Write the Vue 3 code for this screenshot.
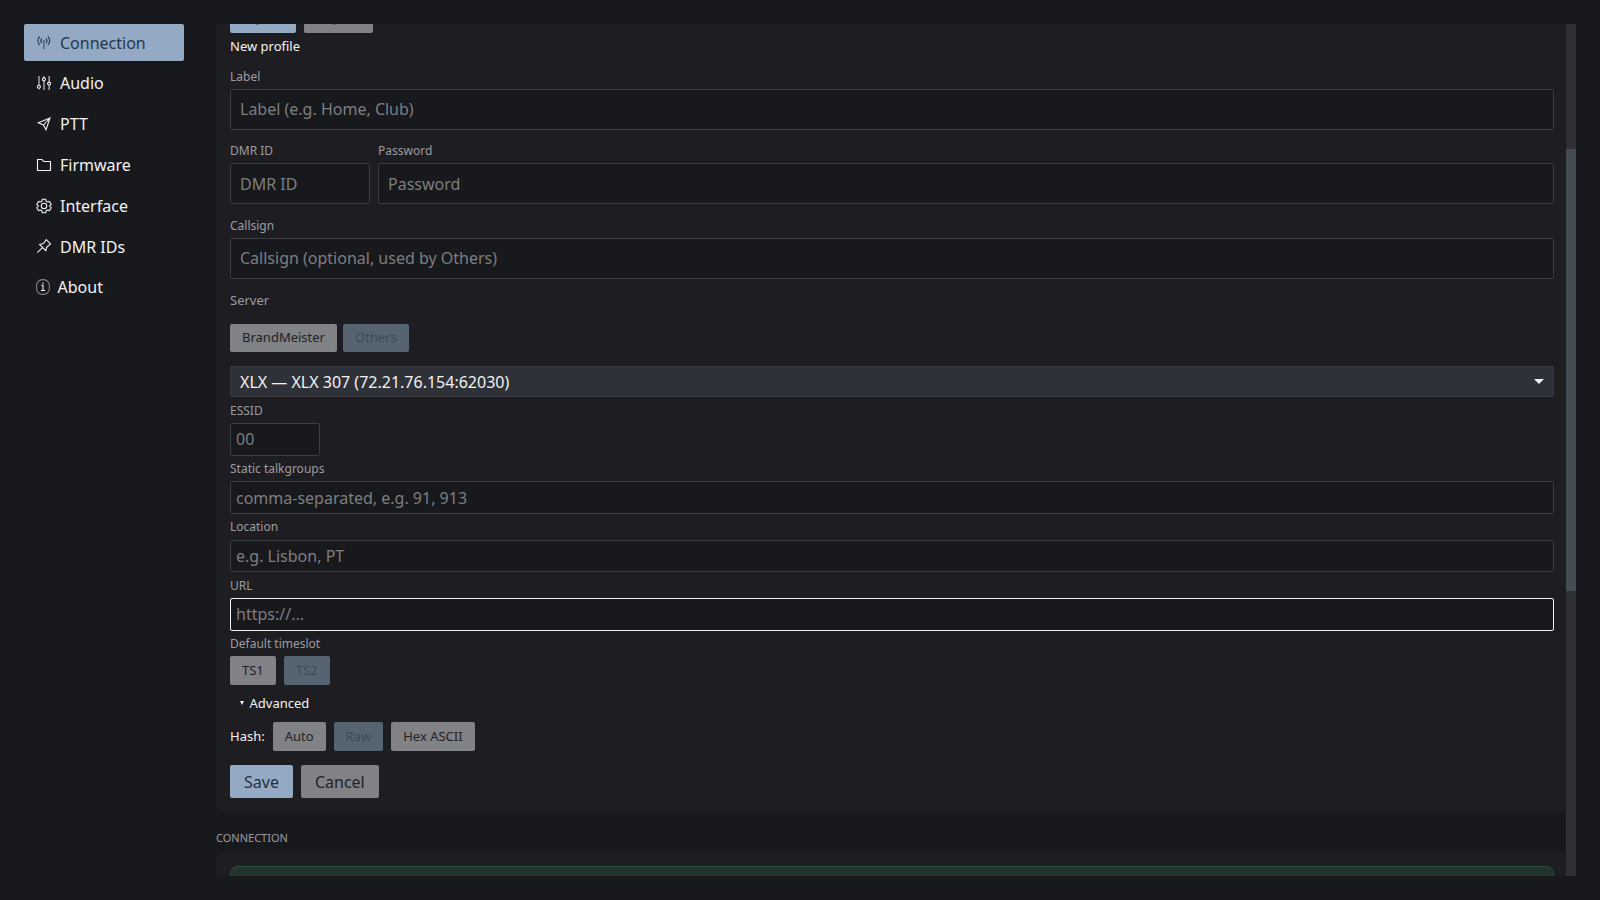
<script setup>
import { ref } from 'vue'

const active = ref('Connection')
const nav = ['Connection', 'Audio', 'PTT', 'Firmware', 'Interface', 'DMR IDs', 'About']
</script>

<template>
  <div class="window">
    <nav class="side">
      <button v-for="name in nav" :key="name" class="item" :class="{ on: name === active, info: name === 'About' }" @click="active = name">
        <svg v-if="name === 'Connection'" viewBox="0 0 16 16"><path class="stem" d="M7.800 7v7" /><path d="M3.800 1.500C1.200 4 1.200 7.500 3.800 10M11.800 1.500c2.600 2.500 2.600 6 0 8.500M5.700 3.500c-1.300 1.500-1.300 3 0 4.500M9.900 3.500c1.300 1.500 1.300 3 0 4.500M7.800 5v1.800" /></svg>
        <svg v-else-if="name === 'Audio'" viewBox="0 0 16 16"><path class="stem" d="M3 1v9M3 13.300v1.200M8 1v1.700M8 6v9M13.200 1v6M13.200 10.300v4.700" /><circle cx="2.900" cy="11.700" r="1.500" /><circle cx="7.900" cy="4.400" r="1.500" /><circle cx="13.100" cy="8.600" r="1.500" /></svg>
        <svg v-else-if="name === 'PTT'" viewBox="0 0 16 16"><path d="M14 2L2.300 6.700l5.200 2.300L10 13.800zM14 2L7.500 9" /></svg>
        <svg v-else-if="name === 'Firmware'" viewBox="0 0 16 16"><path d="M1.500 2.500h4.500l1.500 2h7v9h-13z" /></svg>
        <svg v-else-if="name === 'Interface'" viewBox="0 0 16 16"><path d="M6.300 1.300h3.400l.5 2 1.300.7 2-.6 1.700 2.900-1.500 1.400v.6l1.500 1.400-1.700 2.900-2-.6-1.300.7-.5 2H6.300l-.5-2-1.300-.7-2 .6L.8 9.700l1.500-1.400v-.6L.8 6.300l1.700-2.900 2 .6 1.300-.7z" /><circle cx="8" cy="8" r="2.700" /></svg>
        <svg v-else-if="name === 'DMR IDs'" viewBox="0 0 16 16"><path d="M10.300 .7l4.200 4.200L10.800 8l-1 3.700L3.600 5.500l3.800-1zM6.500 8.700L1.300 13.700" /></svg>
        <svg v-else viewBox="0 0 14 16"><rect class="faint" x=".6" y=".6" width="12.800" height="14.800" rx="6" /><path d="M5.300 6.300h1.700v5M4.900 11.500h4.200M7 3.400v1.500" /></svg>
        <span>{{ name }}</span>
      </button>
    </nav>

    <main class="view">
      <div class="content">
        <section class="card profile">
          <div class="row top">
            <button class="btn small primary">Import</button>
            <button class="btn small exp">Export</button>
          </div>
          <div class="title">New profile</div>

          <label class="cap c1">Label</label>
          <input class="field big up" placeholder="Label (e.g. Home, Club)" />

          <div class="row pair">
            <div class="dmr"><label class="cap">DMR ID</label><input class="field big" placeholder="DMR ID" /></div>
            <div class="pass"><label class="cap">Password</label><input class="field big" placeholder="Password" /></div>
          </div>

          <label class="cap c2">Callsign</label>
          <input class="field big up" placeholder="Callsign (optional, used by Others)" />

          <label class="cap server">Server</label>
          <div class="row kinds">
            <button class="btn small">BrandMeister</button>
            <button class="btn small off">Others</button>
          </div>

          <div class="select">
            <span>XLX — XLX 307 (72.21.76.154:62030)</span>
            <svg class="caret" viewBox="0 0 10 5"><path d="M0 0h10L5 5z" /></svg>
          </div>

          <label class="cap tight low">ESSID</label>
          <input class="field essid up" placeholder="00" />
          <label class="cap tight">Static talkgroups</label>
          <input class="field" placeholder="comma-separated, e.g. 91, 913" />
          <label class="cap tight wide">Location</label>
          <input class="field loc" placeholder="e.g. Lisbon, PT" />
          <label class="cap tight low">URL</label>
          <input class="field focus up" placeholder="https://..." />
          <label class="cap tight">Default timeslot</label>
          <div class="row slots">
            <button class="btn small">TS1</button>
            <button class="btn small off">TS2</button>
          </div>

          <div class="adv"><svg viewBox="0 0 4 4"><path d="M0 0h4L2 4z" /></svg>Advanced</div>
          <div class="row hash">
            <span>Hash:</span>
            <button class="btn small">Auto</button>
            <button class="btn small off">Raw</button>
            <button class="btn small">Hex ASCII</button>
          </div>
          <div class="row actions">
            <button class="btn primary">Save</button>
            <button class="btn">Cancel</button>
          </div>
        </section>

        <h2>CONNECTION</h2>
        <section class="card status"><div class="banner"></div></section>
      </div>
      <div class="track"><div class="thumb"></div></div>
    </main>
  </div>
</template>

<style>
html, body { background: #18191c; overflow: hidden; }
</style>

<style scoped>
* { box-sizing: border-box; }
.window {
  height: 900px; padding: 24px; display: flex; gap: 32px;
  background: #18191c; color: #f2f2f3;
  font: 16px/22px "Noto Sans", sans-serif;
}
button, input { font-family: inherit; margin: 0; }
.side { width: 160px; display: flex; flex-direction: column; gap: 4px; flex: none; }
.item {
  height: 36.900px; padding: 0 12px; display: flex; align-items: center; gap: 8px; flex: none;
  border: 0; border-radius: 2px; background: none; color: inherit; font-size: 16px; line-height: 22px; text-align: left;
}
.item.on { background: #94a9c4; color: #26384a; padding-top: 1px; }
.item svg { width: 16px; height: 16px; fill: none; stroke: currentColor; stroke-width: 1.100; flex: none; }
.item.info { gap: 7.500px; padding-bottom: 2px; }
.item.info svg { width: 14px; }
.faint { opacity: .5; }
.stem { opacity: .6; stroke-width: 1.600; }
.view { flex: 1; display: flex; overflow: hidden; height: 852px; }
.content { flex: 1; min-width: 0; }
.card { background: #1e1e22; padding: 0 12px 0 14px; }
.profile { height: 788px; border-radius: 0 0 0 8px; display: flow-root; }
.row { display: flex; gap: 8px; }
.btn {
  height: 33px; padding: 0 14px; border: 0; border-radius: 2px;
  background: #808285; color: #222327; font-size: 16px; line-height: 22px; white-space: nowrap;
}
.btn.small { height: 28px; padding: 0 12px; font-size: 13px; line-height: 18px; }
.btn.primary { background: #94a9c4; color: #26303c; }
.btn.off { background: #566471; color: #3d4a58; }
.top { margin-top: -19px; }
.top .btn.small { width: 66px; padding: 0 14px 4px 9px; }
.top .btn.exp { width: 69px; padding: 0 12px 4px; }
.title { margin-top: 4px; font-size: 13px; line-height: 18px; }
.cap { display: block; height: 16px; font-size: 12px; line-height: 16px; color: #9c9ca1; }
.c1 { margin-top: 14px; }
.field {
  display: block; width: 100%; height: 33px; padding: 0 5px; outline: 0;
  border: 1px solid #3b3c40; border-radius: 2px; background: #18191c; color: #f2f2f3; font-size: 16px;
}
.field::placeholder { color: #7d7e81; opacity: 1; }
.field.big { height: 41px; padding: 0 9px; margin-top: 4px; }
.field.up { padding-bottom: 2px; }
.pair { margin-top: 13px; }
.dmr { width: 140px; }
.pass { flex: 1; }
.c2 { margin-top: 14px; }
.server { margin-top: 13px; font-size: 13px; }
.kinds { gap: 6px; margin-top: 16px; }
.kinds .btn.small { padding-bottom: 2px; }
.select {
  margin-top: 14px; height: 31px; padding: 0 9px; display: flex; align-items: center; justify-content: space-between;
  border: 1px solid #3b3c40; border-radius: 2px; background: #2e3137;
}
.caret { width: 10px; height: 5px; fill: #f2f2f3; }
.tight { margin: 5px 0 4px; }
.tight.low { margin-top: 6px; }
.tight.wide { margin-bottom: 5px; }
.essid { width: 90px; }
.field.loc { height: 32px; }
.field.focus { border-color: #f2f2f3; }
.slots .btn.small, .hash .btn.small { height: 29px; padding-bottom: 1px; }
.adv { margin-top: 9px; padding-left: 10px; display: flex; align-items: center; gap: 5.500px; font-size: 13px; line-height: 18px; }
.adv svg { width: 4px; height: 4px; fill: currentColor; }
.hash { margin-top: 10px; align-items: center; font-size: 13px; }
.hash span { padding-bottom: 1px; }
.actions { margin-top: 14px; }
h2 { margin: 18px 0 0; font-size: 11px; line-height: 16px; font-weight: 400; color: #9c9ca1; }
.status { margin-top: 6px; padding-top: 14px; height: 60px; border-radius: 8px 0 0 0; }
.banner { height: 44px; border: 1px solid #29543d; border-radius: 8px; background: #22332e; }
.track { width: 10px; background: #2e3036; padding-top: 125px; }
.thumb { height: 442px; background: #434c52; }
</style>
